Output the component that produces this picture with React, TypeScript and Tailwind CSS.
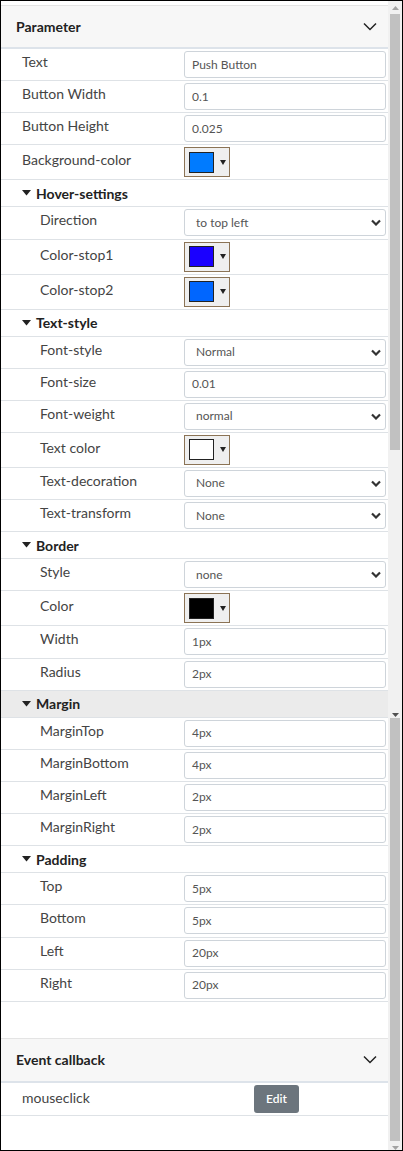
import React from "react";

type Item =
  | { kind: "input"; label: string; value: string; sub?: boolean }
  | { kind: "select"; label: string; value: string; sub?: boolean }
  | { kind: "color"; label: string; color: string; sub?: boolean }
  | { kind: "section"; title: string; hover?: boolean };

const ITEMS: Item[] = [
  { kind: "input", label: "Text", value: "Push Button" },
  { kind: "input", label: "Button Width", value: "0.1" },
  { kind: "input", label: "Button Height", value: "0.025" },
  { kind: "color", label: "Background-color", color: "#007bff" },
  { kind: "section", title: "Hover-settings" },
  { kind: "select", label: "Direction", value: "to top left", sub: true },
  { kind: "color", label: "Color-stop1", color: "#1a00ff", sub: true },
  { kind: "color", label: "Color-stop2", color: "#0066ff", sub: true },
  { kind: "section", title: "Text-style" },
  { kind: "select", label: "Font-style", value: "Normal", sub: true },
  { kind: "input", label: "Font-size", value: "0.01", sub: true },
  { kind: "select", label: "Font-weight", value: "normal", sub: true },
  { kind: "color", label: "Text color", color: "#ffffff", sub: true },
  { kind: "select", label: "Text-decoration", value: "None", sub: true },
  { kind: "select", label: "Text-transform", value: "None", sub: true },
  { kind: "section", title: "Border" },
  { kind: "select", label: "Style", value: "none", sub: true },
  { kind: "color", label: "Color", color: "#000000", sub: true },
  { kind: "input", label: "Width", value: "1px", sub: true },
  { kind: "input", label: "Radius", value: "2px", sub: true },
  { kind: "section", title: "Margin", hover: true },
  { kind: "input", label: "MarginTop", value: "4px", sub: true },
  { kind: "input", label: "MarginBottom", value: "4px", sub: true },
  { kind: "input", label: "MarginLeft", value: "2px", sub: true },
  { kind: "input", label: "MarginRight", value: "2px", sub: true },
  { kind: "section", title: "Padding" },
  { kind: "input", label: "Top", value: "5px", sub: true },
  { kind: "input", label: "Bottom", value: "5px", sub: true },
  { kind: "input", label: "Left", value: "20px", sub: true },
  { kind: "input", label: "Right", value: "20px", sub: true },
];

function Chevron() {
  return (
    <svg width="14" height="9" viewBox="0 0 14 9" className="mr-[11px]">
      <polyline points="1,1.5 7,7.5 13,1.5" fill="none" stroke="#222" strokeWidth="1.5" />
    </svg>
  );
}

function Caret() {
  return (
    <svg width="9" height="6" viewBox="0 0 9 6" className="mr-[5px] shrink-0">
      <polygon points="0,0 9,0 4.5,5.5" fill="#222" />
    </svg>
  );
}

function PanelHeader({ title, tall }: { title: string; tall?: boolean }) {
  return (
    <div
      className={`flex items-center justify-between pl-[15px] bg-[#f7f7f7] border-t border-[#e4e4e4] border-b-2 border-b-[#dde3ea] ${tall ? "h-[45px]" : "h-[44px]"}`}
    >
      <span className="text-[14px] font-bold text-[#222]">{title}</span>
      <Chevron />
    </div>
  );
}

function Label({ text, sub }: { text: string; sub?: boolean }) {
  return (
    <div className={`w-[183px] shrink-0 leading-5 text-[14px] text-[#444] ${sub ? "pl-[39px]" : "pl-[21px]"}`}>
      {text}
    </div>
  );
}

function Row({ item }: { item: Item }) {
  if (item.kind === "section") {
    return (
      <div
        className={`flex items-center h-[27px] pl-[21px] border-b border-[#dee2e6] ${item.hover ? "bg-[#ebebeb]" : ""}`}
      >
        <Caret />
        <span className="text-[14px] font-bold text-[#222]">{item.title}</span>
      </div>
    );
  }
  if (item.kind === "color") {
    return (
      <div className="flex items-start h-[35px] pt-[2px] border-b border-[#dee2e6]">
        <div className="mt-[3px]">
          <Label text={item.label} sub={item.sub} />
        </div>
        <div className="flex items-center w-[46px] h-[30px] pl-[4px] gap-[6px] bg-[#efefef] border border-[#8b7355]">
          <div className="w-[25px] h-[21px] border border-[#222]" style={{ backgroundColor: item.color }} />
          <svg width="6" height="5" viewBox="0 0 6 5">
            <polygon points="0,0 6,0 3,5" fill="#222" />
          </svg>
        </div>
      </div>
    );
  }
  return (
    <div className="flex items-start h-[32.15px] pt-[2px] border-b border-[#dee2e6]">
      <div className="mt-[1px]">
        <Label text={item.label} sub={item.sub} />
      </div>
      <div className="flex items-center flex-1 mr-[2px] h-[27px] bg-white border border-[#ced4da] rounded-[3px]">
        {item.kind === "select" ? (
          <>
            <span className="flex-1 pl-[11px] text-[12px] text-[#555]">{item.value}</span>
            <svg width="10" height="7" viewBox="0 0 10 7" className="mr-[4px]">
              <polyline points="1,1.5 5,5.5 9,1.5" fill="none" stroke="#333" strokeWidth="2.2" />
            </svg>
          </>
        ) : (
          <span className="pl-[7px] text-[12px] text-[#555]">{item.value}</span>
        )}
      </div>
    </div>
  );
}

function ArrowUp() {
  return (
    <svg width="7" height="4" viewBox="0 0 7 4">
      <polygon points="0,4 7,4 3.5,0" fill="#a3a3a3" />
    </svg>
  );
}

function ArrowDown({ dark }: { dark?: boolean }) {
  return (
    <svg width="7" height="4" viewBox="0 0 7 4">
      <polygon points="0,0 7,0 3.5,4" fill={dark ? "#505050" : "#a3a3a3"} />
    </svg>
  );
}

function Scrollbar() {
  return (
    <div className="flex flex-col w-[14px] shrink-0 bg-[#f1f1f1]">
      <div className="flex justify-center items-center h-[13px]">
        <ArrowUp />
      </div>
      <div className="h-[436px] mx-[2px] bg-[#c1c1c1]" />
      <div className="h-[256px]" />
      <div className="flex justify-center items-end pb-[1px] h-[12px]">
        <ArrowDown dark />
      </div>
      <div className="h-[423px] mx-[2px] bg-[#c1c1c1]" />
      <div className="flex justify-center items-end h-[9px]">
        <ArrowDown />
      </div>
    </div>
  );
}

export default function App() {
  return (
    <div
      className="flex w-[403px] h-[1151px] border border-black bg-white overflow-hidden"
      style={{ fontFamily: "Lato, 'Open Sans', sans-serif" }}
    >
      <div className="flex-1 flex flex-col pt-[4px]">
        <PanelHeader title="Parameter" />
        {ITEMS.map((item, i) => (
          <Row key={i} item={item} />
        ))}
        <div className="h-[36px] shrink-0" />
        <PanelHeader title="Event callback" tall />
        <div className="flex items-start h-[33px] pt-[2px] border-b border-[#dee2e6]">
          <div className="mt-[3px]">
            <Label text="mouseclick" />
          </div>
          <div className="pl-[70px]">
            <button className="w-[45px] h-[28px] rounded-[3px] bg-[#6c757d] text-white text-[12px] font-semibold">
              Edit
            </button>
          </div>
        </div>
      </div>
      <Scrollbar />
    </div>
  );
}
